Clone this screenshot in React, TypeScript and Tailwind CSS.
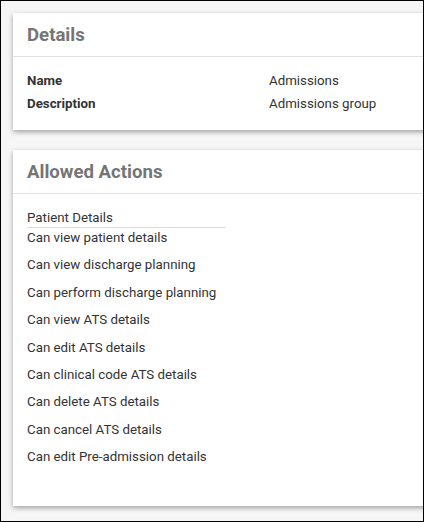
import React from "react";

const actions = [
  "Can view patient details",
  "Can view discharge planning",
  "Can perform discharge planning",
  "Can view ATS details",
  "Can edit ATS details",
  "Can clinical code ATS details",
  "Can delete ATS details",
  "Can cancel ATS details",
  "Can edit Pre-admission details",
];

export default function App() {
  return (
    <div
      className="w-[424px] h-[522px] border border-black bg-[#f6f6f6] overflow-hidden pl-[12px] pt-[12px] text-[#333333]"
      style={{ fontFamily: "Roboto, 'Liberation Sans', sans-serif" }}
    >
      <div className="w-[440px] bg-white shadow-[0_2px_5px_rgba(0,0,0,0.35)]">
        <div className="h-[44px] flex items-center pt-[2px] px-[14px] border-b border-[#e2e2e2]">
          <h2 className="text-[18.6px] font-bold text-[#757575] leading-none">Details</h2>
        </div>
        <div className="pt-[12px] pb-[15px] px-[14px] text-[13.3px]">
          <div className="flex leading-[23px]">
            <div className="w-[242px] font-bold">Name</div>
            <div>Admissions</div>
          </div>
          <div className="flex leading-[23px]">
            <div className="w-[242px] font-bold">Description</div>
            <div>Admissions group</div>
          </div>
        </div>
      </div>

      <div className="w-[440px] mt-[20px] bg-white shadow-[0_2px_5px_rgba(0,0,0,0.35)]">
        <div className="h-[44px] flex items-center pt-[2px] px-[14px] border-b border-[#e2e2e2]">
          <h2 className="text-[18.6px] font-bold text-[#757575] leading-none">Allowed Actions</h2>
        </div>
        <div className="pt-[15px] pb-[40px] px-[14px] text-[13.3px]">
          <div className="w-[199px] leading-[18px] border-b border-[#dcdcdc]">Patient Details</div>
          <div className="flex flex-col gap-[8.4px]">
            {actions.map((a) => (
              <div key={a} className="leading-[19px]">
                {a}
              </div>
            ))}
          </div>
        </div>
      </div>
    </div>
  );
}
